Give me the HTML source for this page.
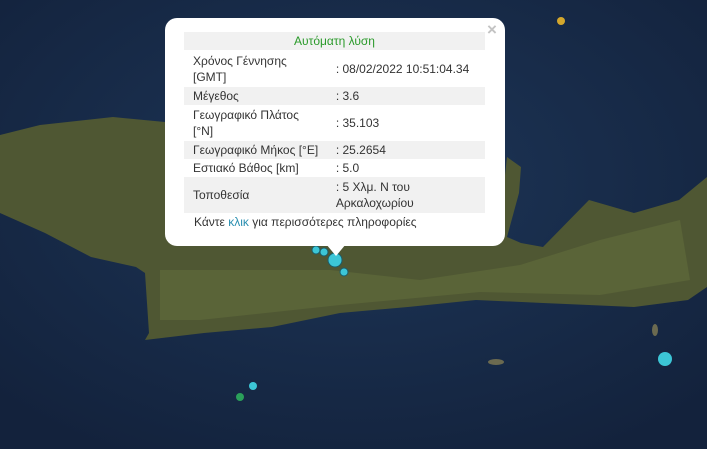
<!DOCTYPE html>
<html><head><meta charset="utf-8"><style>
body{margin:0;width:707px;height:449px;overflow:hidden;background:#1d3050;font-family:"Liberation Sans",sans-serif;position:relative}
svg{position:absolute;left:0;top:0}
.pop{position:absolute;left:165px;top:18px;width:340px;height:228px;background:#fff;border-radius:12px}
.tip{position:absolute;left:326px;top:244px;width:0;height:0;border-left:10px solid transparent;border-right:10px solid transparent;border-top:12px solid #fff}
.x{position:absolute;left:487px;top:20px;color:#c3c3c3;font-size:17px;font-weight:bold}
table{position:absolute;left:184px;top:32px;width:301px;border-collapse:collapse;font-size:12px;color:#333;line-height:16px}
td{padding:1px 9px;vertical-align:middle}
tr.g td{background:#f1f1f1}
td.v{padding-left:2px}
.f{position:absolute;left:194px;top:215px;font-size:12px;color:#333}
</style></head><body>
<svg width="707" height="449">
<defs><radialGradient id="s" cx="50%" cy="40%" r="70%"><stop offset="0" stop-color="#1d3658"/><stop offset="1" stop-color="#13223c"/></radialGradient></defs>
<rect width="707" height="449" fill="url(#s)"/>
<polygon fill="#4f5733" points="0,135 40,125 113,117 165,122 300,160 505,175 507,157 521,167 519,193 507,237 521,243 543,247 589,200 634,213 679,200 707,177 707,287 688,300 634,307 543,303 476,300 408,307 340,313 272,327 204,333 145,340 149,333 145,273 136,267 91,257 45,233 0,213"/>
<polygon fill="#5a6438" points="160,270 330,270 420,280 520,265 600,240 680,220 690,280 600,295 480,292 340,305 200,320 160,320"/>
<ellipse cx="655" cy="330" rx="3" ry="6" fill="#6b6a50"/>
<ellipse cx="496" cy="362" rx="8" ry="3" fill="#6b6a50"/>
<circle cx="316" cy="250" r="4" fill="#3cc6d6" stroke="#1b5d6a"/>
<circle cx="324" cy="252" r="4" fill="#3cc6d6" stroke="#1b5d6a"/>
<circle cx="335" cy="260" r="7" fill="#3cc6d6" stroke="#1b5d6a"/>
<circle cx="344" cy="272" r="4" fill="#3cc6d6" stroke="#1b5d6a"/>
<circle cx="665" cy="359" r="7" fill="#3cc6d6"/>
<circle cx="253" cy="386" r="4" fill="#3cc6d6"/>
<circle cx="240" cy="397" r="4" fill="#2aa05a"/>
<circle cx="561" cy="21" r="4" fill="#d4a72c"/>
</svg>
<div class="pop"></div><div class="tip"></div><div class="x">×</div>
<table>
<tr class="g"><td colspan="2" style="text-align:center;color:#2a9a2a;height:16px">Αυτόματη λύση</td></tr>
<tr><td style="height:35px">Χρόνος Γέννησης<br>[GMT]</td><td class="v">: 08/02/2022 10:51:04.34</td></tr>
<tr class="g"><td style="height:16px">Μέγεθος</td><td class="v">: 3.6</td></tr>
<tr><td style="height:34px">Γεωγραφικό Πλάτος<br>[°N]</td><td class="v">: 35.103</td></tr>
<tr class="g"><td style="height:16px;white-space:nowrap">Γεωγραφικό Μήκος [°E]</td><td class="v">: 25.2654</td></tr>
<tr><td style="height:16px">Εστιακό Βάθος [km]</td><td class="v">: 5.0</td></tr>
<tr class="g"><td style="height:34px">Τοποθεσία</td><td class="v">: 5 Χλμ. Ν του<br>Αρκαλοχωρίου</td></tr>
</table>
<div class="f">Κάντε <span style="color:#2a8fb0">κλικ</span> για περισσότερες πληροφορίες</div>
</body></html>
